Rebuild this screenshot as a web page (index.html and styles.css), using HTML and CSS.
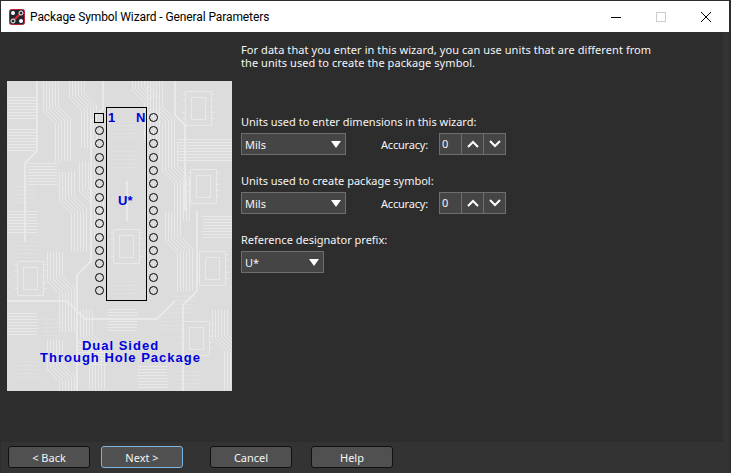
FILE: index.html
```html
<!DOCTYPE html>
<html lang="en">
<head>
    <meta charset="UTF-8">
    <meta name="viewport" content="width=device-width, initial-scale=1.0">
    <title>Package Symbol Wizard</title>
    <link rel="stylesheet" href="styles.css">
</head>
<body>
<div class="window">
    <div class="titlebar">
        <svg class="app-icon" width="16" height="16" viewBox="0 0 16 16">
            <rect x="0.5" y="0.5" width="15" height="15" rx="2" fill="#22262c" stroke="#b8243a"/>
            <path d="M4 12L12 4" stroke="#e02b3c" stroke-width="2"/>
            <circle cx="4" cy="4" r="2" fill="#fff"/>
            <circle cx="12" cy="4" r="2" fill="#22262c" stroke="#fff"/>
            <circle cx="4" cy="12" r="2" fill="#22262c" stroke="#fff"/>
            <circle cx="12" cy="12" r="2" fill="#fff"/>
        </svg>
        <span class="title">Package Symbol Wizard - General Parameters</span>
        <div class="caption-btns">
            <svg width="10" height="12" viewBox="0 0 10 12"><path d="M0 6.5H10" stroke="#000"/></svg>
            <svg width="10" height="12" viewBox="0 0 10 12"><rect x="0.5" y="1.5" width="9" height="9" fill="none" stroke="#ccc"/></svg>
            <svg width="10" height="12" viewBox="0 0 10 12"><path d="M0 1L10 11M10 1L0 11" stroke="#000"/></svg>
        </div>
    </div>

    <div class="content">
        <div class="picture">
            <svg width="225" height="310" viewBox="0 0 225 310">
                <defs>
                    <path id="bus" d="M0 0V30L12 42V80M3 0V29L15 41V80M6 0V28L18 40V80M9 0V27L21 39V80M12 0V26L24 38V80M15 0V25L27 37V80"/>
                    <path id="ladder" d="M0 0H30M0 3H30M0 6H30M0 9H30M0 12H30M0 15H30M0 18H30M0 21H30"/>
                    <path id="chip" d="M0 0H26V34H0ZM6 6H20V28H6ZM-3 3H0M-3 9H0M-3 15H0M-3 21H0M-3 27H0M26 3H29M26 9H29M26 15H29M26 21H29M26 27H29"/>
                    <path id="dots" d="M0 0H24M0 4H24M0 8H24M0 12H24M0 16H24" stroke-dasharray="1 2"/>
                </defs>
                <rect width="225" height="310" fill="#dcdcdc"/>
                <g fill="none" stroke="#e9e9e9">
                    <use href="#ladder" x="0.5" y="16.5"/>
                    <use href="#ladder" x="0.5" y="48.5"/>
                    <use href="#bus" x="36.5" y="0.5"/>
                    <use href="#bus" x="62.5" y="-12.5"/>
                    <use href="#ladder" x="20.5" y="82.5"/>
                    <use href="#dots" x="6.5" y="105.5"/>
                    <use href="#chip" x="10.5" y="180.5"/>
                    <use href="#bus" x="52.5" y="90.5"/>
                    <use href="#bus" x="72.5" y="80.5"/>
                    <use href="#ladder" x="0.5" y="130.5"/>
                    <use href="#dots" x="8.5" y="160.5"/>
                    <use href="#bus" x="40.5" y="170.5"/>
                    <use href="#chip" x="106.5" y="148.5"/>
                    <use href="#dots" x="106.5" y="40.5"/>
                    <use href="#dots" x="106.5" y="70.5"/>
                    <use href="#dots" x="106.5" y="200.5"/>
                    <use href="#bus" x="140.5" y="0.5"/>
                    <use href="#bus" x="125.5" y="-20.5"/>
                    <use href="#chip" x="178.5" y="10.5"/>
                    <use href="#ladder" x="170.5" y="58.5"/>
                    <use href="#ladder" x="195.5" y="58.5"/>
                    <use href="#chip" x="183.5" y="88.5"/>
                    <use href="#bus" x="155.5" y="60.5"/>
                    <use href="#bus" x="158.5" y="130.5"/>
                    <use href="#ladder" x="195.5" y="135.5"/>
                    <use href="#chip" x="192.5" y="170.5"/>
                    <use href="#dots" x="165.5" y="215.5"/>
                    <use href="#ladder" x="0.5" y="232.5"/>
                    <use href="#dots" x="36.5" y="238.5"/>
                    <use href="#ladder" x="100.5" y="228.5"/>
                    <use href="#ladder" x="70.5" y="262.5"/>
                    <use href="#bus" x="70.5" y="228.5"/>
                    <use href="#chip" x="176.5" y="240.5"/>
                    <use href="#dots" x="150.5" y="232.5"/>
                    <use href="#dots" x="8.5" y="280.5"/>
                    <use href="#bus" x="40.5" y="258.5"/>
                    <use href="#ladder" x="130.5" y="285.5"/>
                    <use href="#bus" x="205.5" y="228.5"/>
                    <use href="#dots" x="170.5" y="290.5"/>
                    <path d="M30 0V70L18 82V160M96 0V28L84 40V180L70 194V310M168 0V34L178 44V130M190 130V210L176 224V310M0 220H60L78 238H150L168 220M120 100V140" stroke-width="2"/>
                </g>
                <rect x="99.5" y="26.5" width="40" height="193" fill="none" stroke="#000"/>
                <rect x="87.5" y="32.5" width="9" height="9" fill="none" stroke="#000"/>
                <g fill="none" stroke="#000">
                    <circle cx="92.5" cy="49.5" r="4"/><circle cx="92.5" cy="62.5" r="4"/><circle cx="92.5" cy="76.5" r="4"/>
                    <circle cx="92.5" cy="89.5" r="4"/><circle cx="92.5" cy="102.5" r="4"/><circle cx="92.5" cy="116.5" r="4"/>
                    <circle cx="92.5" cy="129.5" r="4"/><circle cx="92.5" cy="142.5" r="4"/><circle cx="92.5" cy="156.5" r="4"/>
                    <circle cx="92.5" cy="169.5" r="4"/><circle cx="92.5" cy="182.5" r="4"/><circle cx="92.5" cy="196.5" r="4"/>
                    <circle cx="92.5" cy="209.5" r="4"/>
                    <circle cx="146.5" cy="36.5" r="4"/><circle cx="146.5" cy="49.5" r="4"/><circle cx="146.5" cy="62.5" r="4"/>
                    <circle cx="146.5" cy="76.5" r="4"/><circle cx="146.5" cy="89.5" r="4"/><circle cx="146.5" cy="102.5" r="4"/>
                    <circle cx="146.5" cy="116.5" r="4"/><circle cx="146.5" cy="129.5" r="4"/><circle cx="146.5" cy="142.5" r="4"/>
                    <circle cx="146.5" cy="156.5" r="4"/><circle cx="146.5" cy="169.5" r="4"/><circle cx="146.5" cy="182.5" r="4"/>
                    <circle cx="146.5" cy="196.5" r="4"/><circle cx="146.5" cy="209.5" r="4"/>
                </g>
                <g class="pic-text">
                    <text x="101" y="41">1</text>
                    <text x="129" y="41">N</text>
                    <text x="111" y="124">U*</text>
                    <text class="pic-caption" x="113.5" y="269">Dual Sided</text>
                    <text class="pic-caption" x="113.5" y="281">Through Hole Package</text>
                </g>
            </svg>
        </div>

        <div class="form">
            <p class="intro">For data that you enter in this wizard, you can use units that are different from<br>the units used to create the package symbol.</p>

            <div class="field first">
                <div class="label">Units used to enter dimensions in this wizard:</div>
                <div class="row">
                    <div class="select"><span>Mils</span><i class="arrow"></i></div>
                    <span class="acc-label">Accuracy:</span>
                    <div class="spinner">
                        <span class="spin-val">0</span>
                        <span class="spin-btn"><svg width="12" height="8" viewBox="0 0 12 8"><path d="M1 7L6 2L11 7" fill="none" stroke="#fff" stroke-width="2"/></svg></span>
                        <span class="spin-btn"><svg width="12" height="8" viewBox="0 0 12 8"><path d="M1 1L6 6L11 1" fill="none" stroke="#fff" stroke-width="2"/></svg></span>
                    </div>
                </div>
            </div>

            <div class="field">
                <div class="label">Units used to create package symbol:</div>
                <div class="row">
                    <div class="select"><span>Mils</span><i class="arrow"></i></div>
                    <span class="acc-label">Accuracy:</span>
                    <div class="spinner">
                        <span class="spin-val">0</span>
                        <span class="spin-btn"><svg width="12" height="8" viewBox="0 0 12 8"><path d="M1 7L6 2L11 7" fill="none" stroke="#fff" stroke-width="2"/></svg></span>
                        <span class="spin-btn"><svg width="12" height="8" viewBox="0 0 12 8"><path d="M1 1L6 6L11 1" fill="none" stroke="#fff" stroke-width="2"/></svg></span>
                    </div>
                </div>
            </div>

            <div class="field">
                <div class="label">Reference designator prefix:</div>
                <div class="row">
                    <div class="select small"><span>U*</span><i class="arrow"></i></div>
                </div>
            </div>
        </div>
        <div class="strip"></div>
    </div>

    <div class="footer">
        <button class="btn">&lt; Back</button>
        <button class="btn default">Next &gt;</button>
        <button class="btn cancel">Cancel</button>
        <button class="btn help">Help</button>
    </div>
</div>
</body>
</html>
```

FILE: styles.css
```css
html, body {
    margin: 0;
    padding: 0;
    background-color: #2d2d2d;
}
.window {
    width: 731px;
    height: 473px;
    box-sizing: border-box;
    display: flex;
    flex-direction: column;
    overflow: hidden;
    background-color: #2d2d2d;
    color: #f5f5f5;
    font-family: "Noto Sans", sans-serif;
    font-size: 11px;
}
.titlebar {
    height: 31px;
    margin: 1px 2px 0 1px;
    flex: none;
    display: flex;
    align-items: center;
    background-color: #fff;
    color: #000;
    font-family: Roboto, sans-serif;
    font-size: 12px;
}
.app-icon {
    margin-left: 8px;
}
.title {
    margin-left: 5px;
    letter-spacing: -0.1px;
}
.caption-btns {
    margin-left: auto;
    display: flex;
    gap: 35px;
    padding-right: 18px;
}
.content {
    flex: 1;
    display: flex;
    min-height: 0;
}
.picture {
    margin: 49px 0 0 7px;
    width: 225px;
    height: 310px;
    flex: none;
}
.picture svg {
    display: block;
}
.pic-text text {
    fill: #0000dc;
    font-family: "Liberation Sans", sans-serif;
    font-weight: bold;
    font-size: 13px;
}
.pic-text .pic-caption {
    letter-spacing: 1px;
    text-anchor: middle;
}
.form {
    margin-left: 9px;
    flex: 1;
}
.intro {
    margin: 11px 0 0 0;
    line-height: 13px;
    letter-spacing: 0.07px;
}
.field {
    margin-top: 18px;
}
.field.first {
    margin-top: 45px;
}
.label {
    height: 15px;
    line-height: 15px;
    margin-bottom: 4px;
}
.row {
    display: flex;
    align-items: center;
}
.select {
    width: 105px;
    height: 22px;
    box-sizing: border-box;
    border: 1px solid #6e6e6e;
    background-color: #454545;
    display: flex;
    align-items: center;
    justify-content: space-between;
    padding: 0 4px 0 3px;
}
.select.small {
    width: 83px;
}
.arrow {
    width: 0;
    height: 0;
    border-left: 5.5px solid transparent;
    border-right: 5.5px solid transparent;
    border-top: 7px solid #fff;
}
.acc-label {
    margin-left: 35px;
    width: 58px;
    letter-spacing: -0.2px;
}
.spinner {
    display: flex;
    height: 22px;
    box-sizing: border-box;
    border: 1px solid #6e6e6e;
    background-color: #454545;
}
.spin-val {
    width: 21px;
    padding-left: 2px;
    box-sizing: border-box;
    line-height: 20px;
}
.spin-btn {
    width: 22px;
    box-sizing: border-box;
    border-left: 1px solid #6e6e6e;
    display: flex;
    align-items: center;
    justify-content: center;
}
.strip {
    width: 6px;
    margin-right: 2px;
    flex: none;
    background-color: #333;
}
.footer {
    height: 31px;
    flex: none;
    box-sizing: border-box;
    margin: 0 2px 0 1px;
    padding: 4px 0 0 7px;
    display: flex;
    align-items: flex-start;
    background-color: #333;
}
.btn {
    width: 82px;
    height: 22px;
    padding: 0;
    box-sizing: border-box;
    border: 1px solid #111;
    border-radius: 3px;
    background-color: #505050;
    color: #f5f5f5;
    font-family: "Noto Sans", sans-serif;
    font-size: 11px;
}
.btn.default {
    margin-left: 11px;
    border-color: #7db4e0;
}
.btn.cancel {
    margin-left: 27px;
}
.btn.help {
    margin-left: 19px;
}
```
